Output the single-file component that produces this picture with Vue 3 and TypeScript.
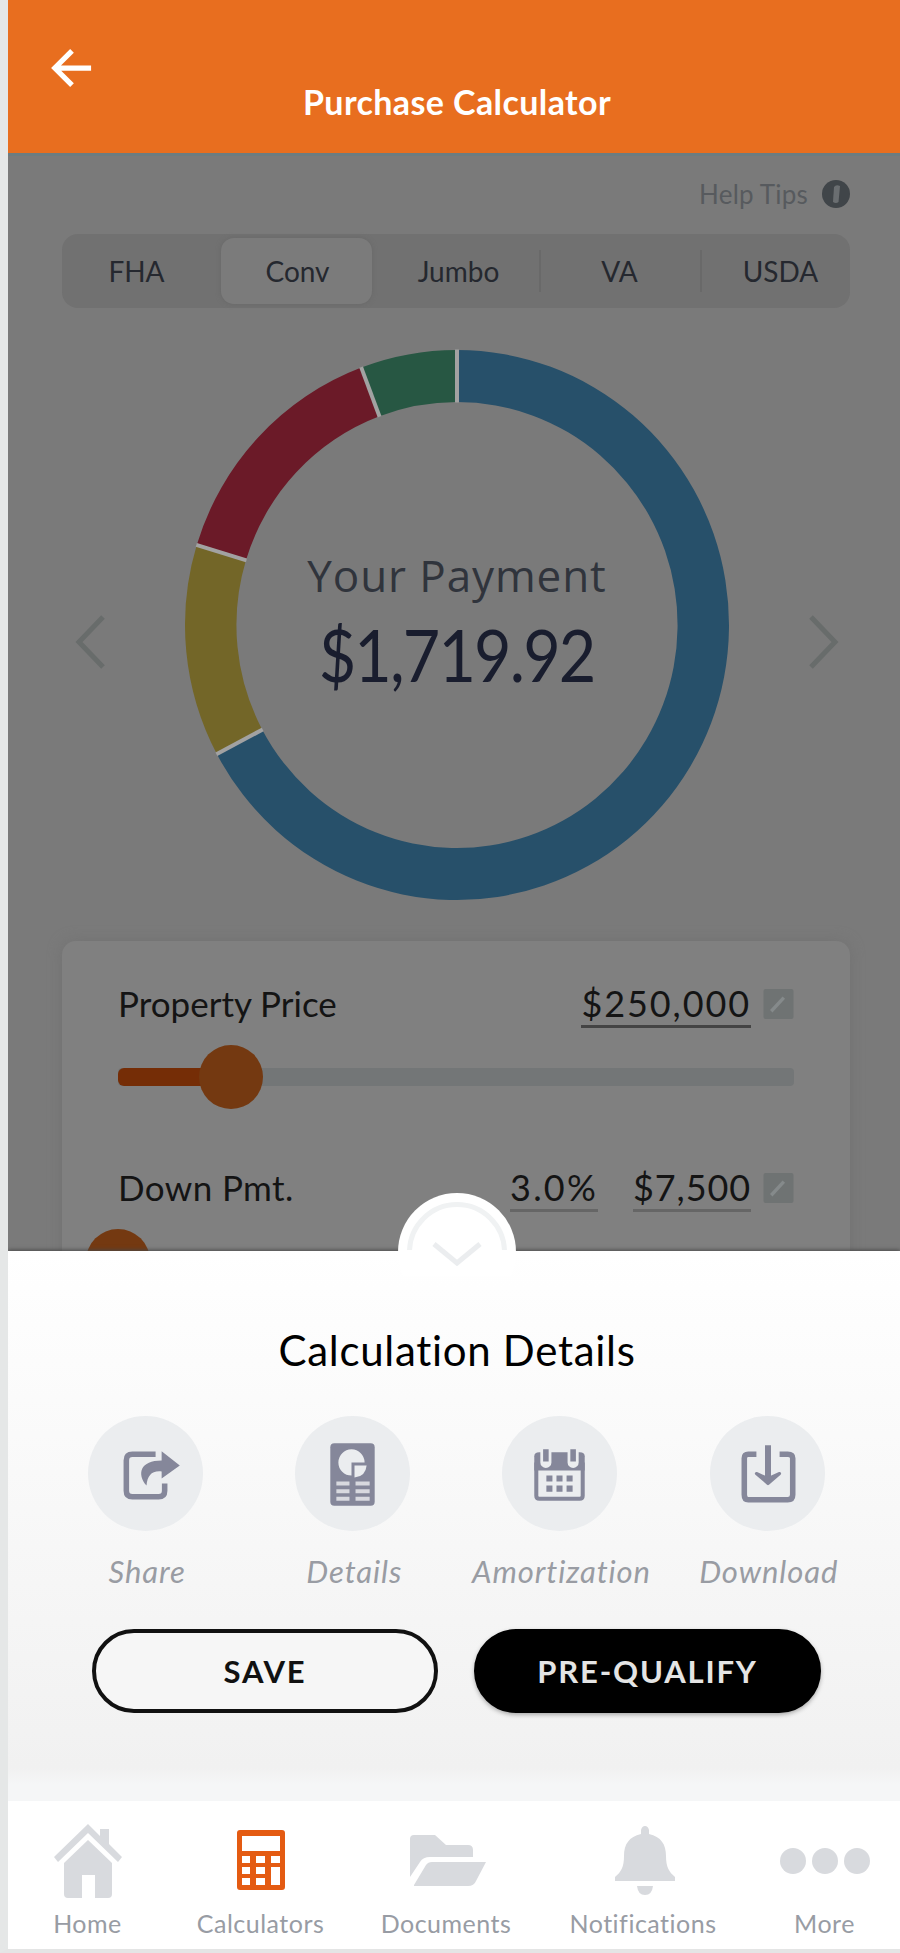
<script setup lang="ts">
interface Slice { color: string; from: number; to: number }
const loans = ['FHA', 'Conv', 'Jumbo', 'VA', 'USDA']
const slices: Slice[] = [
  { color: '#27506a', from: 0, to: 242 },
  { color: '#736628', from: 242, to: 286.9 },
  { color: '#6b1a28', from: 286.9, to: 339.4 },
  { color: '#275743', from: 339.4, to: 360 },
]
function point(angle: number, r: number): string {
  const a = (angle * Math.PI) / 180
  return `${(275 + r * Math.sin(a)).toFixed(2)} ${(275 - r * Math.cos(a)).toFixed(2)}`
}
function ring(s: Slice): string {
  const large = s.to - s.from > 180 ? 1 : 0
  return `M${point(s.from, 275)} A275 275 0 ${large} 1 ${point(s.to, 275)} L${point(s.to, 223)} A223 223 0 ${large} 0 ${point(s.from, 223)} Z`
}
function divider(s: Slice): string {
  return `M${point(s.from, 222.5)} L${point(s.from, 275.5)}`
}
</script>

<template>
  <main class="screen">
    <header class="top">
      <svg class="back" viewBox="0 0 44 44"><path d="M42 22H5M22 4L4 22L22 40" /></svg>
      <h1>Purchase Calculator</h1>
    </header>

    <section class="body">
      <div class="help">
        <span>Help Tips</span>
        <svg viewBox="0 0 28 28"><circle cx="14" cy="14" r="14" /><path d="M12 7Q14 4 18 6L16.500 22Q14 24 11 22Z" /></svg>
      </div>
      <nav class="segments">
        <div v-for="(l, i) in loans" :key="l" class="segment" :class="['seg' + i, { active: i === 1 }]"><span>{{ l }}</span></div>
      </nav>

      <div class="chart-row">
        <svg class="chev" viewBox="0 0 30 54"><path d="M27 2L3 27L27 52" /></svg>
        <div class="donut">
          <svg viewBox="0 0 550 550" preserveAspectRatio="none">
            <path v-for="s in slices" :key="s.color" :d="ring(s)" :fill="s.color" />
            <path v-for="s in slices" :key="'d' + s.color" :d="divider(s)" class="divider" />
          </svg>
          <div class="payment">
            <span class="caption">Your Payment</span>
            <span class="amount">$1,719.92</span>
          </div>
        </div>
        <svg class="chev" viewBox="0 0 30 54"><path d="M3 2L27 27L3 52" /></svg>
      </div>

      <div class="card">
        <div class="row">
          <span class="name">Property Price</span>
          <span class="value price">$250,000</span>
          <svg class="edit" viewBox="0 0 31 31"><rect width="31" height="31" rx="2" /><path d="M8 23L21 9" /></svg>
        </div>
        <div class="track"><div class="fill"></div><div class="thumb"></div></div>
        <div class="row second">
          <span class="name down-name">Down Pmt.</span>
          <span class="value pct">3.0%</span>
          <span class="value down">$7,500</span>
          <svg class="edit" viewBox="0 0 31 31"><rect width="31" height="31" rx="2" /><path d="M8 23L21 9" /></svg>
        </div>
        <div class="track zero"><div class="thumb"></div></div>
      </div>
    </section>

    <section class="sheet">
      <div class="knob">
        <svg viewBox="0 0 118 118"><circle cx="59" cy="59" r="59" fill="#fff" /><circle cx="59" cy="59" r="47.500" class="halo" /><path d="M36 51L59 70L82 51" /></svg>
      </div>
      <h2>Calculation Details</h2>
      <div class="actions">
        <div class="action">
          <div class="disc">
            <svg viewBox="0 0 114 114">
              <path d="M67 38H44Q38 38 38 44V74Q38 80 44 80H70Q76 80 76 74V67" class="line" />
              <path d="M73 35L91 49L73 62V55C63 54 59 59 58 69C48 57 52 44 73 44Z" />
            </svg>
          </div>
          <span>Share</span>
        </div>
        <div class="action">
          <div class="disc">
            <svg viewBox="0 0 114 114">
              <rect x="35" y="27" width="44" height="62" rx="4" />
              <path d="M56 59A13 13 0 1 1 69 46H56Z" class="pale" />
              <path d="M59 49H71Q70 60 59 61Z" class="pale" />
              <path d="M41 67H54M60 67H74M41 74.500H54M60 74.500H74M41 82H54M60 82H74" class="pale-line" />
            </svg>
          </div>
          <span>Details</span>
        </div>
        <div class="action">
          <div class="disc">
            <svg viewBox="0 0 114 114">
              <path d="M34 46V79Q34 82 37 82H77Q80 82 80 79V46" class="line thin" />
              <path d="M32 40Q32 36 37 36H77Q82 36 82 40V54H32Z" />
              <path d="M43.500 29V46M70.500 29V46" class="clip" />
              <path d="M43.500 33V45M70.500 33V45" class="line" />
              <path d="M44 59h6v6h-6zM54 59h6v6h-6zM64 59h6v6h-6zM44 69h6v6h-6zM54 69h6v6h-6zM64 69h6v6h-6z" />
            </svg>
          </div>
          <span>Amortization</span>
        </div>
        <div class="action">
          <div class="disc">
            <svg viewBox="0 0 114 114">
              <path d="M46 38H38Q34 38 34 42V78Q34 83 38 83H77Q82 83 82 78V42Q82 38 77 38H69" class="line" />
              <path d="M57.500 29V62" class="line thick" />
              <path d="M46 57L57.500 62L69 57L57.500 67Z" class="join" />
            </svg>
          </div>
          <span>Download</span>
        </div>
      </div>
      <div class="buttons">
        <button class="save">SAVE</button>
        <button class="prequal">PRE-QUALIFY</button>
      </div>
    </section>

    <footer class="tabs">
      <div class="tab home">
        <svg viewBox="0 0 68 74">
          <path d="M34 0L46 12V5H55V20L68 33L64 38L34 9L4 38L0 33Z" />
          <path d="M34 16L58 39V70Q58 74 54 74H41V51H28V74H14Q10 74 10 70V39Z" />
        </svg>
        <span>Home</span>
      </div>
      <div class="tab calc">
        <svg viewBox="0 0 48 60">
          <path fill-rule="evenodd" d="M3 0H45Q48 0 48 3V57Q48 60 45 60H3Q0 60 0 57V3Q0 0 3 0ZM5 6V21H43V6ZM5 26V33H13V26ZM19 26V33H28V26ZM34 26V33H43V26ZM5 37V44H13V37ZM19 37V44H28V37ZM5 48V55H13V48ZM19 48V55H28V48ZM34 37V55H43V37Z" />
        </svg>
        <span>Calculators</span>
      </div>
      <div class="tab docs">
        <svg viewBox="0 0 76 52">
          <path d="M0 4Q0 0 4 0H25L36 10H58Q63 10 63 15V22H20Q13 22 10 27L0 42Z" />
          <path d="M4 50L16 30Q18 27 22 27H76L66 46Q64 51 58 51H4Z" />
        </svg>
        <span>Documents</span>
      </div>
      <div class="tab alerts">
        <svg viewBox="0 0 60 70">
          <path d="M26 8V4Q27 0 30 0Q33 0 34 4V8C46 11 51 18 51 30C51 41 54 46 60 51V55H0V51C6 46 9 41 9 30C9 18 14 11 26 8Z" />
          <path d="M22 60H38Q37 69 30 69Q23 69 22 60Z" />
        </svg>
        <span>Notifications</span>
      </div>
      <div class="tab more">
        <svg viewBox="0 0 90 26"><circle cx="13" cy="13" r="13" /><circle cx="45" cy="13" r="13" /><circle cx="77" cy="13" r="13" /></svg>
        <span>More</span>
      </div>
    </footer>
  </main>
</template>

<style>
body { margin: 0; }
</style>

<style scoped>
* { box-sizing: border-box; }
svg { display: block; overflow: visible; }
.screen {
  width: 900px; height: 1953px; overflow: hidden; background: #fff;
  border-left: 8px solid #e5e7e7; border-bottom: 4px solid #e4e5e5;
  font-family: Lato, "Open Sans", sans-serif; white-space: nowrap;
  font-variant-ligatures: none;
  display: flex; flex-direction: column;
}
.top { height: 153px; flex: none; background: #e86e1f; padding: 47px 0 0 43px; }
.back { width: 42px; height: 42px; fill: none; stroke: #fff; stroke-width: 5.5; }
h1 {
  margin: -9px 0 0 -43px; text-align: center; color: #fff;
  font-size: 34px; line-height: 44px; font-weight: 700; letter-spacing: 0.4px;
  padding-left: 6px;
}
.body {
  height: 1098px; flex: none; overflow: hidden; background: #7a7a7a;
  border-top: 3px solid #6c7c80; padding: 23px 50px 0 54px;
}
.help { display: flex; justify-content: flex-end; align-items: center; gap: 14px; height: 30px; color: #575a5e; }
.help span { font-size: 26px; letter-spacing: 0.2px; }
.help svg { width: 28px; height: 28px; fill: #404549; }
.help path { fill: #6a6e71; }
.segments {
  margin-top: 25px; height: 74px; border-radius: 16px; background: #717171;
  display: grid; grid-template-columns: repeat(5, 161px); padding: 4px 0;
  color: #25282f; font-size: 28px;
}
.segment { display: flex; align-items: center; justify-content: center; margin-left: -6px; margin-right: 6px; }
.segment.active { background: #7b7b7b; border-radius: 13px; margin-left: -2px; margin-right: 12px; box-shadow: 0 0 5px #686868; }
.seg1 span { margin-left: 2px; }
.seg3, .seg4 { background: linear-gradient(#696969, #696969) left center / 2px 42px no-repeat; }
.chart-row { margin-top: 42px; display: flex; align-items: center; justify-content: space-between; padding: 0 12px 0 14px; }
.chev { width: 30px; height: 54px; margin-top: 34px; fill: none; stroke: #686c6b; stroke-width: 5; }
.donut { width: 544px; height: 550px; display: grid; }
.donut > svg { grid-area: 1 / 1; width: 544px; height: 550px; }
.divider { stroke: #a2a2a2; stroke-width: 4; }
.payment { grid-area: 1 / 1; display: flex; flex-direction: column; align-items: center; padding-top: 195px; }
.caption { font: 44px/60px "Open Sans", sans-serif; color: #30343c; letter-spacing: 0.9px; }
.amount { font-size: 71px; line-height: 84px; color: #191d2e; margin-top: 8px; letter-spacing: -2px; transform: scaleX(0.91); }
.card {
  margin-top: 41px; height: 400px; border-radius: 14px 14px 0 0; background: #808080;
  padding: 38px 56px 0; box-shadow: 0 0 14px #727272;
}
.row { display: flex; align-items: center; height: 50px; color: #141414; }
.name { font-size: 35px; margin-right: auto; line-height: 44px; margin-top: -3px; }
.down-name { letter-spacing: 0.4px; }
.value { font-size: 36px; line-height: 44px; border-bottom: 3px solid #444; margin-right: 12px; }
.price { letter-spacing: 1.9px; }
.pct { margin-right: 35px; letter-spacing: 2.2px; }
.down { letter-spacing: 0.9px; }
.second .value { border-bottom: 3px solid #666; }
.edit { width: 31px; height: 30px; fill: #6f7373; }
.edit path { stroke: #858a8b; stroke-width: 3.5; }
.track { height: 18px; margin-top: 39px; border-radius: 4px; background: #737677; display: flex; align-items: center; }
.fill { width: 90px; height: 18px; border-radius: 6px 0 0 6px; background: #752d06; }
.thumb { width: 64px; height: 64px; border-radius: 50%; background: #743911; margin-left: -9px; flex: none; }
.second { margin-top: 77px; }
.zero .thumb { margin-left: -32px; }
.zero { background: none; }
.sheet {
  height: 550px; flex: none; background: linear-gradient(#fff 0, #fcfcfc 20%, #f1f1f1 94%, #f5f6f7 97%);
  display: flex; flex-direction: column; position: relative; box-shadow: 0 -1px 4px #484848;
}
.knob { position: absolute; left: 390px; top: -58px; width: 118px; height: 118px; clip-path: inset(0 0 35px 0); }
.halo { fill: none; stroke: #f0f2f3; stroke-width: 5; clip-path: inset(0 -4px 52px -4px); }
.knob path { fill: none; stroke: #ebedef; stroke-width: 5; }
h2 { margin: 73px 0 0 6px; text-align: center; font-size: 42px; line-height: 52px; font-weight: 400; letter-spacing: 0.7px; }
.actions { display: grid; grid-template-columns: repeat(4, 207.2px); margin: 40px 0 0 34px; }
.action { display: flex; flex-direction: column; align-items: center; color: #999ca3; font-size: 31px; font-style: italic; letter-spacing: 0.9px; }
.action span { line-height: 40px; margin-top: 20px; margin-left: 3px; }
.disc { width: 115px; height: 115px; border-radius: 50%; background: #ebedef; fill: #85879a; }
.line { fill: none; stroke: #85879a; stroke-width: 5.5; }
.thick { stroke-width: 6; }
.thin { stroke-width: 4; }
.clip { stroke: #ebedef; stroke-width: 11; stroke-linecap: round; }
.join { stroke: #85879a; stroke-width: 3; stroke-linejoin: round; }
.pale { fill: #ebedef; }
.pale-line { stroke: #d8d9df; stroke-width: 4; }
.buttons { display: flex; gap: 36px; margin: 38px 0 0 84px; }
button {
  width: 346px; height: 84px; border: 4px solid #111; border-radius: 42px; background: #f6f6f6; padding: 0;
  font: 700 31px Lato, sans-serif; letter-spacing: 1.8px; color: #111;
}
.prequal { background: #000; color: #e4e4e4; border-color: #000; box-shadow: 0 2px 4px #aaa; width: 347px; }
.tabs { height: 148px; flex: none; position: relative; z-index: 1; background: #fff; display: flex; color: #989ca4; fill: #d8dade; }
.tab { display: flex; flex-direction: column; align-items: center; font-size: 25px; letter-spacing: 0.5px; flex: none; }
.tab span { margin-top: auto; line-height: 32px; margin-bottom: 10px; }
.home { width: 159px; }
.home svg { width: 68px; height: 74px; margin-top: 23px; }
.calc { width: 187px; }
.calc svg { width: 48px; height: 60px; margin-top: 29px; fill: #e45b12; }
.docs { width: 184px; }
.docs svg { width: 76px; height: 52px; margin: 34px 0 0 4px; }
.alerts { width: 210px; }
.alerts svg { width: 60px; height: 70px; margin: 25px 0 0 3px; }
.more { width: 153px; }
.more svg { width: 90px; height: 26px; margin-top: 47px; }
</style>
